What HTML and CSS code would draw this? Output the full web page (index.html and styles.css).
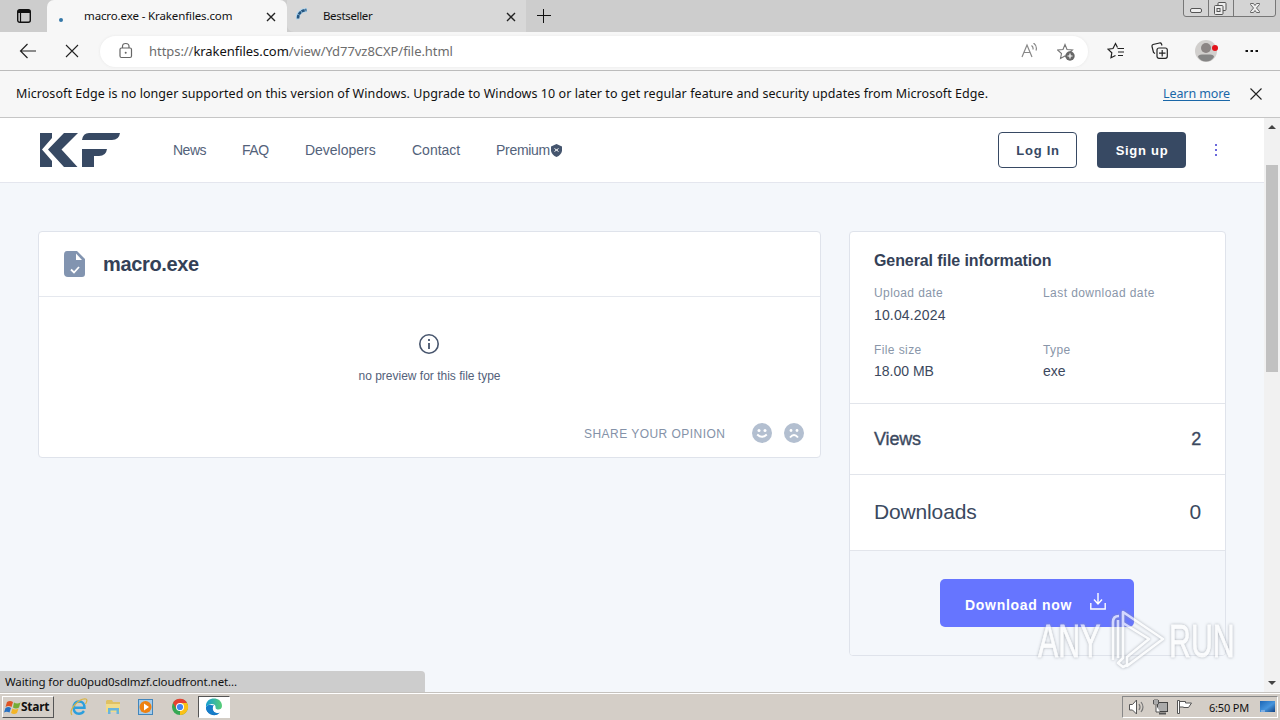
FILE: index.html
```html
<!DOCTYPE html>
<html lang="en">
<head>
<meta charset="utf-8">
<title>macro.exe - Krakenfiles.com</title>
<link rel="stylesheet" href="styles.css">
</head>
<body>
<div class="screen">
  <header class="tabstrip">
    <div class="tab-actions"><svg width="16" height="16" viewBox="0 0 16 16"><rect x="1.7" y="1.7" width="12.6" height="12.6" rx="2" fill="none" stroke="#111" stroke-width="1.4"/><path d="M2 2h12v3H2z" fill="#111"/><path d="M4.5 4v10" stroke="#111" stroke-width="1.2"/></svg></div>
    <div class="tab tab-active"><i class="load-dot"></i><span class="tab-title title-one">macro.exe - Krakenfiles.com</span><svg class="tab-close" width="10" height="10" viewBox="0 0 10 10"><path d="M1 1l8 8M9 1l-8 8" stroke="#222" stroke-width="1.4"/></svg></div>
    <div class="tab tab-idle"><svg class="spinner" width="14" height="14" viewBox="0 0 14 14"><path d="M1.500 11.500C1 6 4.500 2 11 2" fill="none" stroke="#b5d8ef" stroke-width="4"/><path d="M2 10.500C2 5.500 5 2.500 10.500 2" fill="none" stroke="#245580" stroke-width="2.600" stroke-dasharray="3.500 .6"/></svg><span class="tab-title title-two">Bestseller</span><svg class="tab-close" width="10" height="10" viewBox="0 0 10 10"><path d="M1 1l8 8M9 1l-8 8" stroke="#222" stroke-width="1.4"/></svg></div>
    <svg class="new-tab" width="14" height="14" viewBox="0 0 14 14"><path d="M6.500 0v14M0 6.500h14" stroke="#111" stroke-width="1"/></svg>
    <svg class="window-buttons" width="94" height="18" viewBox="0 0 94 18"><path d="M.5 0v14q0 2.500 2.500 2.500h87q2.500 0 2.500-2.500V0M25.500 0v16M50.500 0v16" fill="#d4d4d4" stroke="#777"/><rect x="7.500" y="8.500" width="11" height="4" rx="1.500" fill="#eee" stroke="#555"/><g fill="#ececec" stroke="#555"><rect x="35" y="2.500" width="8" height="8" rx="1"/><rect x="31.500" y="5.500" width="8.500" height="9" rx="1"/><rect x="34" y="8.500" width="3" height="3"/></g><path d="M67.500 3.500h3l1.500 2 1.500-2h3v1l-3 3.500 3 3.500v1h-3L72 10.500l-1.500 2h-3v-1l3-3.500-3-3.500z" fill="#eee" stroke="#666"/></svg>
  </header>
  <div class="toolbar">
    <svg class="back" width="18" height="16" viewBox="0 0 18 16"><path d="M17 8H2M8.500 1L1.500 8l7 7" fill="none" stroke="#222" stroke-width="1.200"/></svg>
    <svg class="stop" width="14" height="14" viewBox="0 0 14 14"><path d="M1 1l12 12M13 1L1 13" stroke="#222" stroke-width="1.100"/></svg>
    <div class="address">
      <svg class="lock" width="14" height="18" viewBox="0 0 14 18"><rect x="1" y="6" width="11.500" height="9.500" rx="1.500" fill="none" stroke="#666" stroke-width="1.200"/><path d="M3.500 6V4.500Q3.500 1.500 6.750 1.500T10 4.500V6" fill="none" stroke="#666" stroke-width="1.200"/><circle cx="6.700" cy="10.700" r="1" fill="#666"/></svg>
      <span class="url">https://<b>krakenfiles.com</b>/view/Yd77vz8CXP/file.html</span>
      <svg class="read" width="17" height="17" viewBox="0 0 17 17" fill="none" stroke="#888" stroke-width="1.200"><path d="M1 14L6 2l5 12M3 9.500h6M10.500 2.500q2 1.500 1.500 4M12.500 0q4 3 2.500 7.500"/></svg>
      <svg class="fav" width="19" height="19" viewBox="0 0 19 19"><path d="M8 1.500l2 5 5.500.5-4 3.500 1 5L8 13l-4.500 2.500 1-5-4-3.500 5.500-.5z" fill="none" stroke="#777" stroke-width="1.100"/><circle cx="13" cy="13" r="4.700" fill="#666"/><path d="M13 10.500v5M10.500 13h5" stroke="#fff" stroke-width="1.200"/></svg>
    </div>
    <svg class="stars" width="18" height="18" viewBox="0 0 18 18" fill="none" stroke="#222" stroke-width="1.200"><path d="M10.500 5.500L8.500 1.500l-2.500 5-5 .7 3.800 3.600-.8 5 4.500-2.300M10.500 6.500H17M11 10h6M11 13.500h5"/></svg>
    <svg class="collections" width="18" height="18" viewBox="0 0 18 18" fill="none" stroke="#222" stroke-width="1.200"><path d="M4 11.500l-1.500-1L1 4.500q-.3-1.500 1-2L8.500 1q1.500-.3 2 1l.5 1.500"/><rect x="6" y="6" width="10.300" height="10.300" rx="2"/><path d="M11.200 8v6.500M8 11.200h6.500"/></svg>
    <svg class="avatar" width="24" height="24" viewBox="0 0 24 24"><circle cx="12" cy="12" r="11" fill="#d1cfcd"/><circle cx="12" cy="9" r="5" fill="#8b8584"/><path d="M4 18q0-2.500 4-2.500h8q4 0 4 2.500-3 4.500-8 4.500T4 18" fill="#858585"/><circle cx="21" cy="9" r="3" fill="#e3131b"/></svg>
    <svg class="more" width="14" height="4" viewBox="0 0 14 4"><path d="M.5 1h2.500v2H.5zM5.500 1H8v2H5.500zM10.500 1H13v2h-2.500z" fill="#111"/></svg>
  </div>
  <div class="notice"><span class="notice-text">Microsoft Edge is no longer supported on this version of Windows. Upgrade to Windows 10 or later to get regular feature and security updates from Microsoft Edge.</span><a class="learn">Learn more</a><svg class="dismiss" width="12" height="12" viewBox="0 0 12 12"><path d="M.5.5l11 11m0-11l-11 11" stroke="#222" stroke-width="1.100"/></svg></div>
  <div class="viewport">
    <main class="page">
      <nav class="nav">
        <svg class="logo" width="83" height="36" viewBox="0 0 83 36" fill="#374963"><path d="M2 1h12v5L4 17.500 14 29v6H2zM26 1h14L23.500 17.500 39.500 35H26L10 17.500zM44 8q1-7 7-7h31q-1 7-8 7zM44 17h25q-1 7-8 7h-5v11H44z"/></svg>
        <div class="links"><a class="l-news">News</a><a class="l-faq">FAQ</a><a class="l-dev">Developers</a><a class="l-contact">Contact</a><a class="l-premium">Premium</a><svg class="shield" width="11" height="13" viewBox="0 0 11 13"><path d="M5.500 0L11 2.500V7q-1 4-5.500 6Q1 11 0 7V2.500z" fill="#45556e"/><path d="M3.500 4.500l4 3m0-3l-4 3" stroke="#fff"/></svg></div>
        <button class="button login">Log In</button><button class="button signup">Sign up</button>
        <svg class="dots" width="4" height="14" viewBox="0 0 4 14"><path d="M1 1h2v2H1zM1 6h2v2H1zM1 11h2v2H1z" fill="#6b69dc"/></svg>
      </nav>
      <div class="columns">
        <section class="card file-card">
          <div class="file-head"><svg width="22" height="27" viewBox="0 0 22 27"><path d="M3 0h10l8 8v15q0 3-3 3H4q-4 0-4-4V4q0-4 3-4" fill="#8294b0"/><path d="M12 2.500V9h6z" fill="#fff"/><path d="M7 18.500l3 3 5-5.500" fill="none" stroke="#fff" stroke-width="1.800"/></svg><h1>macro.exe</h1></div>
          <div class="preview"><svg width="20" height="20" viewBox="0 0 20 20"><circle cx="10" cy="10" r="9.200" fill="none" stroke="#47556d" stroke-width="1.600"/><path d="M10 9v6M10 5v2" stroke="#47556d" stroke-width="1.800"/></svg><p>no preview for this file type</p></div>
          <div class="opinion"><span>SHARE YOUR OPINION</span><svg width="20" height="20" viewBox="0 0 20 20"><circle cx="10" cy="10" r="10" fill="#b3bfd0"/><circle cx="7" cy="7.500" r="1.500" fill="#fff"/><circle cx="13" cy="7.500" r="1.500" fill="#fff"/><path d="M5.200 11.500q4.800 4.500 9.600 0" fill="none" stroke="#fff" stroke-width="2"/></svg><svg width="20" height="20" viewBox="0 0 20 20"><circle cx="10" cy="10" r="10" fill="#b3bfd0"/><circle cx="7" cy="7.500" r="1.400" fill="#fff"/><circle cx="13" cy="7.500" r="1.400" fill="#fff"/><path d="M6 14.500q4-5 8 0" fill="none" stroke="#fff" stroke-width="2"/></svg></div>
        </section>
        <aside class="card info-card">
          <div class="general"><h2>General file information</h2>
            <dl><div><dt class="dt-upload">Upload date</dt><dd class="date">10.04.2024</dd></div><div><dt class="dt-last">Last download date</dt></div><div><dt class="dt-size">File size</dt><dd class="size">18.00 MB</dd></div><div><dt class="dt-type">Type</dt><dd class="size">exe</dd></div></dl>
          </div>
          <div class="stat views"><span>Views</span><span class="views-number">2</span></div>
          <div class="stat downloads"><span>Downloads</span><span>0</span></div>
          <div class="download-area"><button class="download"><span>Download now</span><svg width="16" height="17" viewBox="0 0 16 17" fill="none" stroke="#fff" stroke-width="1.400"><path d="M8 0v10M4 6.500L8 11l4-4.500M.8 10v6h14.400v-6"/></svg></button></div>
        </aside>
      </div>
    </main>
    <div class="scrollbar"><i class="arrow up"></i><i class="thumb"></i><i class="arrow down"></i></div>
  </div>
  <footer class="taskbar">
    <div class="start"><svg width="17" height="16" viewBox="0 0 17 16"><path d="M3 3q3-2 6 0L7.500 8q-3-2-6 0z" fill="#df5425"/><path d="M10 3.500q3 2 6.500 0L15 8.500q-3 2-6 0z" fill="#75ad36"/><path d="M1.500 9q3-2 5.500 0l-1.500 4.500q-3-1.500-5.500 0z" fill="#2871c2"/><path d="M8.500 9.500q3 2 6 0L13 14q-3 2-6 0z" fill="#f4b526"/></svg><b>Start</b></div>
    <svg class="app ie" width="18" height="18" viewBox="0 0 18 18"><path d="M14 13q-2 2.700-5 2.700-5.300 0-5.300-6T9 3.500t5.500 6.200H5" fill="none" stroke="#2c9fdd" stroke-width="2.400"/><path d="M2 17C-2 12 9 0 16 1q2 1-.5 5" fill="none" stroke="#d8b445" stroke-width="1.200"/></svg>
    <svg class="app folder" width="18" height="18" viewBox="0 0 18 18"><path d="M2 3l1-1h5l1 2h7v10H2z" fill="#dfc163"/><path d="M2 6h14v8H2z" fill="#f1dc8a"/><path d="M4 16v-6h11v6h-2.500v-3.500h-6V16z" fill="#69b5dc"/></svg>
    <svg class="app media" width="18" height="18" viewBox="0 0 18 18"><rect x="1.500" y="1.500" width="14" height="15" fill="#a6cbe8" stroke="#4286bc"/><circle cx="8.500" cy="9" r="6" fill="#ee8110"/><path d="M7 5.500l5 3.500-5 3.500z" fill="#fff"/></svg>
    <svg class="app chrome" width="18" height="18" viewBox="0 0 18 18"><circle cx="9" cy="9" r="8" fill="#35a853"/><path d="M9 9V17a8 8 0 0 0 7-12H9z" fill="#fbc116"/><path d="M9 9L5.600 11 2 5a8 8 0 0 1 14 0H9z" fill="#e64132"/><circle cx="9" cy="9" r="4" fill="#fff"/><circle cx="9" cy="9" r="3.100" fill="#4285f4"/></svg>
    <div class="edge-task"><svg width="18" height="18" viewBox="0 0 18 18"><defs><linearGradient id="wave"><stop stop-color="#169ed1"/><stop offset="1" stop-color="#58ce76"/></linearGradient></defs><path d="M1 9a8 8 0 0 0 13.500 6q-5 1-6.500-3-1-3 1-5z" fill="#1470bd"/><path d="M1 9C0-2 17-2 17 8c0 4-5 4.500-6.500 2 1-4-5-6-9.500-1" fill="url(#wave)"/><path d="M1 9q3-4 7-1-1.500 3 0 5 2 3 7 1.500Q11 18 6 16 1 14 1 9" fill="#157dca"/></svg></div>
    <div class="tray"><svg class="sound" width="18" height="16" viewBox="0 0 18 16"><path d="M1.500 5.500h3L8.500 1v14l-4-4h-3z" fill="#fff" stroke="#555"/><path d="M11 5q2 3 0 6M13 3q4 5 0 10" fill="none" stroke="#777" stroke-width="1.200"/></svg><svg class="network" width="18" height="16" viewBox="0 0 18 16"><rect x="5.500" y="3.500" width="10" height="9" fill="#aaa" stroke="#444"/><path d="M7 14.500h7" stroke="#555" stroke-width="2"/><path d="M1.500 1v4h5V1M3 0v4M5 0v4M4 6v7h4" fill="#fff" stroke="#555"/></svg><svg class="flag" width="18" height="16" viewBox="0 0 18 16"><path d="M1.500 1.500h2v13h-2zM3.500 2.500h6v1.500h6l-3 4.500h-5V8h-4z" fill="#fff" stroke="#555"/></svg><time>6:50 PM</time><svg class="desktop" width="15" height="14" viewBox="0 0 15 14"><defs><linearGradient id="screen" x2="1" y2="1"><stop stop-color="#1c66b5"/><stop offset=".55" stop-color="#4695dd"/><stop offset="1" stop-color="#114284"/></linearGradient></defs><path d="M0 1h15v11H0z" fill="url(#screen)"/><path d="M1 11h4" stroke="#bce"/></svg></div>
  </footer>
  <div class="status">Waiting for du0pud0sdlmzf.cloudfront.net...</div>
  <div class="watermark"><span>ANY</span><svg width="58" height="66" viewBox="0 0 58 66" fill="none" stroke="#fff" stroke-width="2.600" stroke-linejoin="round"><path d="M14 14V4l40 27-36 27V49l22-18-26-16M4 52V14q0-6 6-6M9 50V12M14 14v36l-5 5 5 4 4-2"/></svg><span>RUN</span></div>
</div>
</body>
</html>
```

FILE: styles.css
```css
* { box-sizing: border-box; }
body { margin: 0; overflow: hidden; }
svg, i { display: block; flex-shrink: 0; }
button { font: inherit; border: 0; padding: 0; }
.screen { position: relative; width: 1280px; height: 720px; overflow: hidden; display: flex; flex-direction: column; font-family: "Noto Sans", sans-serif; font-size: 12px; white-space: nowrap; color: #111; }
.tabstrip { height: 32px; display: flex; background: #cdcdcd; }
.tab-actions { width: 47px; padding: 8px 0 0 16px; }
.tab { width: 240px; height: 32px; display: flex; align-items: center; }
.tab-active { background: #f7f7f7; border-radius: 7px 7px 0 0; }
.tab-idle { background: #d8d8d8; width: 239px; border-radius: 0 0 0 7px; }
.load-dot { width: 4px; height: 4px; border-radius: 50%; background: #3478a8; margin: 8px 21px 0 12px; }
.tab-title { line-height: 18px; }
.title-one { width: 180px; font-size: 11.5px; letter-spacing: -.12px; }
.spinner { margin: -3px 13px 0 9px; }
.title-two { width: 183px; font-size: 11.5px; letter-spacing: -.35px; }
.tab-close { margin-top: 1px; }
.tab-active .tab-close { margin-left: 2px; }
.new-tab { margin: 9px 0 0 11px; }
.window-buttons { margin-left: auto; margin-right: 3px; }
.toolbar { height: 39px; display: flex; align-items: center; background: #f7f7f7; border-bottom: 1px solid #bcbcbc; }
.back { margin-left: 19px; }
.stop { margin-left: 28px; }
.address { margin-left: 21px; width: 988px; height: 31px; border-radius: 16px; background: #fff; display: flex; align-items: center; box-shadow: 0 0 3px #e7e7e7; }
.lock { margin-left: 19px; }
.url { margin-left: 16px; width: 872px; color: #6c6c6c; font-size: 13px; letter-spacing: -.05px; }
.url b { font-weight: 400; color: #111; }
.fav { margin-left: 19px; margin-top: 2px; }
.stars { margin-left: 19px; }
.collections { margin-left: 26px; }
.avatar { margin-left: 25px; }
.more { margin-left: 27px; }
.notice { height: 47px; display: flex; align-items: center; background: #f7f7f7; border-bottom: 1px solid #c6c6c6; padding-left: 16px; font-size: 12.5px; }
.notice-text { width: 1147px; letter-spacing: .065px; margin-top: -1px; }
.learn { color: #1a67a8; text-decoration: underline; text-underline-offset: 2px; width: 87px; letter-spacing: -.1px; margin-top: -1px; }
.viewport { height: 574px; display: flex; }
.page { width: 1264px; background: #f4f7fb; font-family: "Liberation Sans", Arial, sans-serif; color: #3b4960; }
.nav { height: 65px; display: flex; align-items: center; background: #fff; border-bottom: 1px solid #e4e6ee; }
.logo { margin-left: 38px; }
.links { width: 877px; display: flex; align-items: center; font-size: 14px; color: #53627a; }
.l-news { margin-left: 52px; width: 69px; letter-spacing: -.5px; }
.l-faq { width: 63px; letter-spacing: -.45px; }
.l-dev { width: 107px; letter-spacing: -.02px; }
.l-contact { width: 84px; }
.l-premium { width: 54px; letter-spacing: -.3px; }
.shield { margin-left: 1px; }
.button { height: 36px; border-radius: 4px; font-weight: bold; font-size: 13px; letter-spacing: .72px; color: #374963; padding-left: 1px; }
.login { width: 79px; border: 1px solid #374963; background: #fff; }
.signup { width: 89px; margin-left: 20px; color: #fff; background: #374963; }
.dots { margin-left: 28px; }
.columns { display: flex; align-items: flex-start; padding: 48px 38px; gap: 28px; }
.card { background: #fff; border: 1px solid #dfe3eb; border-radius: 4px; overflow: hidden; }
.file-card { width: 783px; height: 227px; }
.file-head { height: 65px; display: flex; align-items: center; gap: 17px; padding-left: 25px; border-bottom: 1px solid #e5e8ee; }
.file-head h1 { margin: 0; font-size: 20px; letter-spacing: -.35px; color: #344157; }
.preview { height: 111px; padding-top: 37px; display: flex; flex-direction: column; align-items: center; }
.preview svg { margin-right: 2px; }
.preview p { margin: 13px 0 0; font-size: 12px; line-height: 18px; color: #53617a; }
.opinion { display: flex; align-items: center; justify-content: flex-end; gap: 12px; padding: 15px 16px 0 0; }
.opinion span { font-size: 12px; letter-spacing: .46px; color: #8492a8; width: 156px; padding-top: 1px; }
.info-card { width: 377px; height: 425px; }
.general { height: 172px; padding: 19px 24px 0; border-bottom: 1px solid #e2e5eb; }
.general h2 { margin: 0; font-size: 16px; line-height: 20px; color: #344157; letter-spacing: -.09px; }
dl { display: grid; grid-template-columns: 169px 1fr; grid-template-rows: 57px 57px; margin: 12px 0 0; }
dt { font-size: 12px; line-height: 20px; color: #8996a9; letter-spacing: .4px; }
dd { margin: 1px 0 0; font-size: 14px; line-height: 22px; color: #3c485d; }
.dt-last { letter-spacing: .43px; }
.date { letter-spacing: .15px; }
.size { margin-top: 0; }
.stat { display: flex; justify-content: space-between; align-items: center; padding: 0 24px; border-bottom: 1px solid #e2e5eb; }
.views { height: 71px; font-size: 18px; -webkit-text-stroke: .35px #3b4960; letter-spacing: -.15px; }
.downloads { height: 76px; font-size: 21px; letter-spacing: -.15px; padding-bottom: 2px; }
.download-area { height: 104px; background: #f4f7fb; display: flex; align-items: center; padding-left: 90px; }
.download { width: 194px; height: 48px; border-radius: 5px; background: #6675ff; color: #fff; display: flex; align-items: center; padding: 0 0 0 25px; font-size: 14px; font-weight: bold; letter-spacing: .7px; }
.download span { width: 125px; text-align: left; padding-top: 4px; }
.download svg { margin-top: -3px; }
.scrollbar { width: 16px; background: #f1f1f1; padding: 7px 2px 0; display: flex; flex-direction: column; align-items: center; }
.thumb { width: 12px; height: 207px; background: #c1c1c1; margin-top: 36px; }
.arrow { border-left: 4px solid transparent; border-right: 4px solid transparent; }
.up { border-bottom: 4px solid #444; }
.down { border-top: 4px solid #444; margin-top: 309px; }
.taskbar { height: 28px; background: #d4cec7; border-top: 1px solid #c5c2be; box-shadow: inset 0 1px #fff; display: flex; align-items: center; padding: 1px 2px 0; }
.start { width: 52px; height: 22px; border: 1px solid; border-color: #fff #555 #555 #fff; display: flex; align-items: center; font-size: 12px; padding-left: 1px; letter-spacing: -.25px; }
.start b { margin-top: -1px; }
.ie { margin-left: 16px; }
.folder, .media, .chrome { margin-left: 16px; }
.media { margin-left: 15px; }
.edge-task { margin-left: 9px; width: 32px; height: 22px; border: 1px solid; border-color: #555 #fff #fff #555; background: #fff; display: flex; align-items: center; justify-content: center; }
.tray { margin-left: auto; width: 156px; height: 22px; border: 1px solid; border-color: #888 #fff #fff #888; display: flex; align-items: center; padding-left: 5px; }
.network, .flag { margin-left: 6px; }
.tray time { margin-left: 15px; width: 51px; font-size: 11px; letter-spacing: -.2px; }
.status { position: absolute; left: 0; bottom: 28px; width: 425px; height: 21px; padding-left: 5px; line-height: 21px; background: #cdcdcd; border-radius: 0 4px 0 0; font-size: 11.5px; letter-spacing: -.1px; }
.watermark { position: absolute; left: 1038px; top: 608px; height: 66px; width: 198px; display: flex; align-items: center; color: #fff; filter: drop-shadow(0 0 1.5px #8e949d); opacity: .72; font-family: "Liberation Sans", sans-serif; font-size: 46px; -webkit-text-stroke: .8px #fff; }
.watermark span { width: 93px; transform: scaleX(.66); transform-origin: left; }
.watermark span + svg { margin-left: -22px; }
.watermark svg + span { margin-left: 2px; }
```
